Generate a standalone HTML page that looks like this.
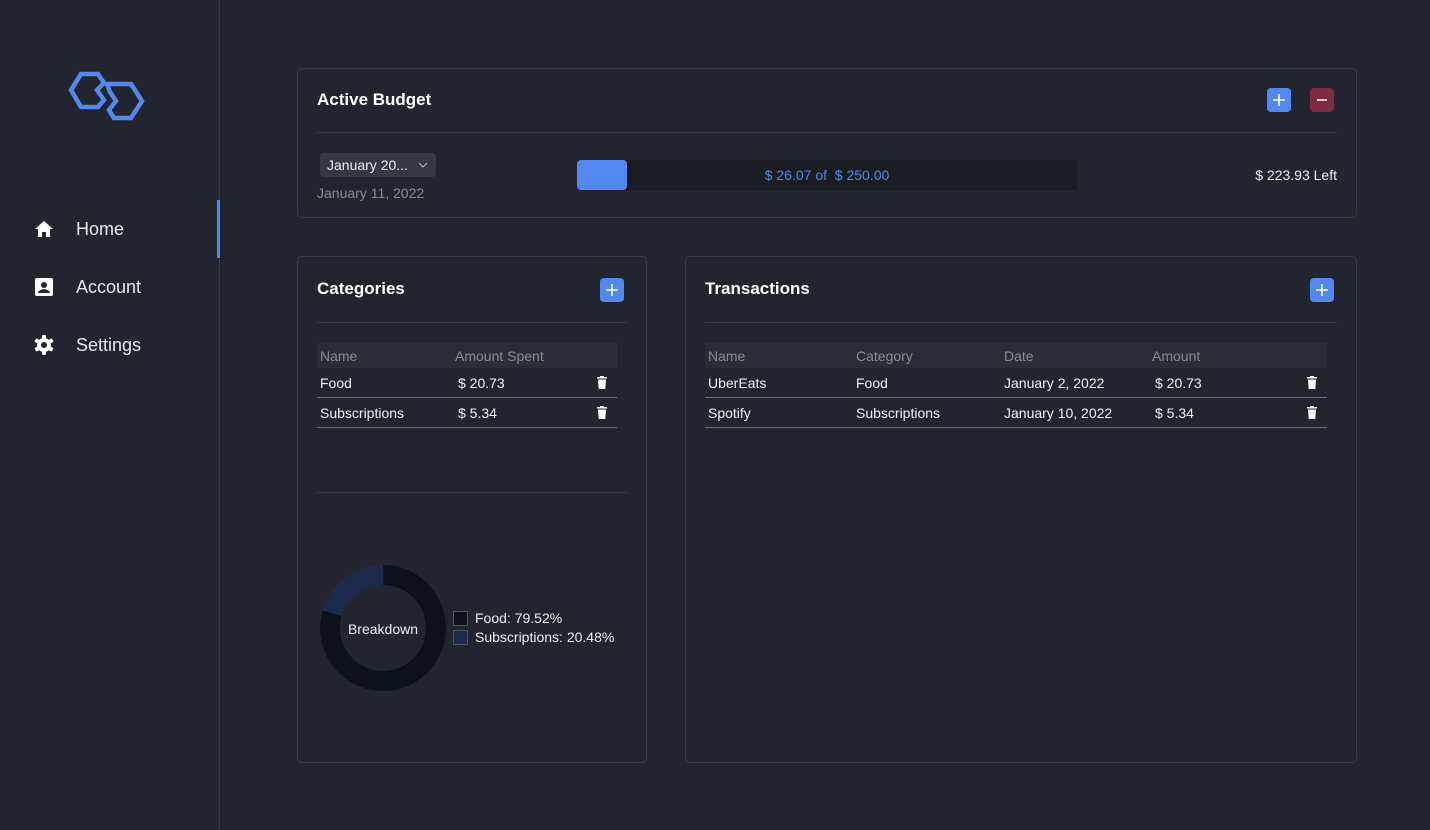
<!DOCTYPE html>
<html><head><meta charset="utf-8"><style>
*{box-sizing:border-box;margin:0;padding:0}
body{width:1430px;height:830px;background:#22252d;font-family:"Liberation Sans",Arial,sans-serif;color:#fff;position:relative;overflow:hidden}
.a{position:absolute}
.side{left:0;top:0;width:220px;height:830px;border-right:1px solid #363943}
.nav{left:34px;font-size:18px;color:#e8e8ea}
.card{border:1px solid #383b44;border-radius:5px;background:#22252d}
.hr{height:1px;background:#383b44}
.btn{width:24px;height:24px;border-radius:4px;background:#5288ef}
.btn svg{position:absolute;left:0;top:0}
.th{background:#2a2d35;height:25px;font-size:14px;color:#8a8c93}
.row{height:30px;border-bottom:1px solid #6a6c72;font-size:14px;color:#f0f0f0}
.c{position:absolute;top:7px}
.th .c{top:5px}
.tr{position:absolute;top:8px}
</style></head><body>
<div class="a side">
<svg class="a" style="left:68px;top:70px" width="78" height="52" viewBox="0 0 78 52"><polygon points="3,20 13,4 30,4 36,13 29,20 36,30 30,37 13,37" fill="none" stroke="#5288ef" stroke-width="4.5" stroke-linejoin="miter"/><polygon points="39,14 63,14 74,31 63,48 46,48 41,40 48,31 42,22" fill="none" stroke="#5288ef" stroke-width="4.5" stroke-linejoin="miter"/></svg>
<div class="a" style="left:217px;top:200px;width:3px;height:58px;background:#5288ef"></div>
<svg class="a" style="left:34px;top:220px" width="20" height="18" viewBox="0 0 20 18"><path d="M10 1 L19 9 H16 V17 H12 V12 H8 V17 H4 V9 H1 Z" fill="#fff"/></svg>
<div class="a nav" style="left:76px;top:219px">Home</div>
<svg class="a" style="left:35px;top:278px" width="18" height="18" viewBox="0 0 18 18"><rect x="0" y="0" width="18" height="18" rx="2" fill="#fff"/><circle cx="9" cy="7" r="3" fill="#22252d"/><path d="M3 15 C4 10 14 10 15 15 Z" fill="#22252d"/></svg>
<div class="a nav" style="left:76px;top:277px">Account</div>
<svg class="a" style="left:34px;top:335px" width="20" height="20" viewBox="0 0 20 20"><g fill="#fff"><circle cx="10" cy="10" r="7"/><rect x="8" y="0" width="4" height="20" rx="1"/><rect x="8" y="0" width="4" height="20" rx="1" transform="rotate(60 10 10)"/><rect x="8" y="0" width="4" height="20" rx="1" transform="rotate(120 10 10)"/></g><circle cx="10" cy="10" r="3" fill="#22252d"/></svg>
<div class="a nav" style="left:76px;top:335px">Settings</div>
</div>

<div class="a card" style="left:297px;top:68px;width:1060px;height:150px"></div>
<div class="a" style="left:317px;top:90px;font-size:17px;font-weight:bold">Active Budget</div>
<div class="a btn" style="left:1267px;top:88px"><svg width="24" height="24"><path d="M12 6V18M6 12H18" stroke="#fff" stroke-width="1.5"/></svg></div>
<div class="a btn" style="left:1310px;top:88px;background:#7e2a40"><svg width="24" height="24"><path d="M7 12H17" stroke="#fff" stroke-width="1.5"/></svg></div>
<div class="a hr" style="left:317px;top:132px;width:1020px"></div>
<div class="a" style="left:320px;top:153px;width:116px;height:24px;background:#363943;border-radius:4px;font-size:14px;line-height:24px;padding-left:7px;color:#eee">January 20...<svg style="position:absolute;left:98px;top:9px" width="10" height="6"><path d="M1 1L5 5L9 1" fill="none" stroke="#bbb" stroke-width="1"/></svg></div>
<div class="a" style="left:317px;top:185px;font-size:14px;color:#8a8c93">January 11, 2022</div>
<div class="a" style="left:577px;top:160px;width:500px;height:30px;background:#1b1c22;border-radius:4px"></div>
<div class="a" style="left:577px;top:160px;width:50px;height:30px;background:#5288ef;border-radius:4px"></div>
<div class="a" style="left:577px;top:167px;width:500px;text-align:center;font-size:14px;color:#5288ef">$ 26.07 of &nbsp;$ 250.00</div>
<div class="a" style="left:1200px;top:167px;width:137px;text-align:right;font-size:14px;color:#f0f0f0">$ 223.93 Left</div>

<div class="a card" style="left:297px;top:256px;width:350px;height:507px"></div>
<div class="a" style="left:317px;top:279px;font-size:17px;font-weight:bold">Categories</div>
<div class="a btn" style="left:600px;top:278px"><svg width="24" height="24"><path d="M12 6V18M6 12H18" stroke="#fff" stroke-width="1.5"/></svg></div>
<div class="a hr" style="left:317px;top:322px;width:310px"></div>
<div class="a th" style="left:317px;top:343px;width:300px"><span class="c" style="left:3px">Name</span><span class="c" style="left:138px">Amount Spent</span></div>
<div class="a row" style="left:317px;top:368px;width:300px"><span class="c" style="left:3px">Food</span><span class="c" style="left:141px">$ 20.73</span><svg class="tr" style="left:280px" width="10" height="13" viewBox="0 0 10 13"><path d="M3 0H7V1H10V2.5H0V1H3Z M1 3.5H9L8.3 13H1.7Z" fill="#fff"/></svg></div>
<div class="a row" style="left:317px;top:398px;width:300px"><span class="c" style="left:3px">Subscriptions</span><span class="c" style="left:141px">$ 5.34</span><svg class="tr" style="left:280px" width="10" height="13" viewBox="0 0 10 13"><path d="M3 0H7V1H10V2.5H0V1H3Z M1 3.5H9L8.3 13H1.7Z" fill="#fff"/></svg></div>
<div class="a hr" style="left:317px;top:492px;width:310px"></div>
<div class="a" style="left:320px;top:565px;width:126px;height:126px;border-radius:50%;background:conic-gradient(#0d111b 0 79.52%,#1b2a4a 79.52% 100%)"></div>
<div class="a" style="left:340px;top:585px;width:86px;height:86px;border-radius:50%;background:#22252d"></div>
<div class="a" style="left:320px;top:621px;width:126px;text-align:center;font-size:14px;color:#eee">Breakdown</div>
<div class="a" style="left:453px;top:611px;width:15px;height:15px;background:#0d111b;border:1px solid #555"></div>
<div class="a" style="left:453px;top:630px;width:15px;height:15px;background:#1b2a4a;border:1px solid #555"></div>
<div class="a" style="left:475px;top:610px;font-size:14px;color:#eee">Food: 79.52%</div>
<div class="a" style="left:475px;top:629px;font-size:14px;color:#eee">Subscriptions: 20.48%</div>

<div class="a card" style="left:685px;top:256px;width:672px;height:507px"></div>
<div class="a" style="left:705px;top:279px;font-size:17px;font-weight:bold">Transactions</div>
<div class="a btn" style="left:1310px;top:278px"><svg width="24" height="24"><path d="M12 6V18M6 12H18" stroke="#fff" stroke-width="1.5"/></svg></div>
<div class="a hr" style="left:705px;top:322px;width:632px"></div>
<div class="a th" style="left:705px;top:343px;width:622px"><span class="c" style="left:3px">Name</span><span class="c" style="left:151px">Category</span><span class="c" style="left:299px">Date</span><span class="c" style="left:447px">Amount</span></div>
<div class="a row" style="left:705px;top:368px;width:622px"><span class="c" style="left:3px">UberEats</span><span class="c" style="left:151px">Food</span><span class="c" style="left:299px">January 2, 2022</span><span class="c" style="left:450px">$ 20.73</span><svg class="tr" style="left:602px" width="10" height="13" viewBox="0 0 10 13"><path d="M3 0H7V1H10V2.5H0V1H3Z M1 3.5H9L8.3 13H1.7Z" fill="#fff"/></svg></div>
<div class="a row" style="left:705px;top:398px;width:622px"><span class="c" style="left:3px">Spotify</span><span class="c" style="left:151px">Subscriptions</span><span class="c" style="left:299px">January 10, 2022</span><span class="c" style="left:450px">$ 5.34</span><svg class="tr" style="left:602px" width="10" height="13" viewBox="0 0 10 13"><path d="M3 0H7V1H10V2.5H0V1H3Z M1 3.5H9L8.3 13H1.7Z" fill="#fff"/></svg></div>
</body></html>
